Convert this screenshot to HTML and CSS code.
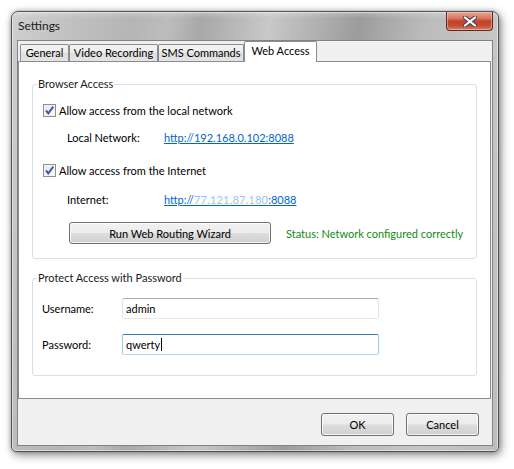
FILE: index.html
```html
<!DOCTYPE html>
<html>
<head>
<meta charset="utf-8">
<link rel="stylesheet" href="styles.css">
</head>
<body>
<div class="window">
  <div class="titlebar">
    <span class="title">Settings</span>
    <div class="close">
      <svg width="16" height="11" viewBox="0 0 16 11">
        <path d="M3 1.5 L13 9.5 M13 1.5 L3 9.5" stroke="#4a4a58" stroke-width="4.2" stroke-linecap="round"/>
        <path d="M3 1.5 L13 9.5 M13 1.5 L3 9.5" stroke="#ffffff" stroke-width="2.2" stroke-linecap="round"/>
      </svg>
    </div>
  </div>
  <div class="client">
    <div class="tabs">
      <div class="tab t-general">General</div>
      <div class="tab t-video">Video Recording</div>
      <div class="tab t-sms">SMS Commands</div>
      <div class="tab active t-web">Web Access</div>
    </div>
    <div class="panel">
      <fieldset class="group g-browser">
        <legend>Browser Access</legend>
        <div class="group-body b-browser">
          <div class="check-row">
            <span class="checkbox"><svg width="11" height="11" viewBox="0 0 11 11"><path d="M2 5.5 L4.3 8.3 L9.3 1.6" fill="none" stroke="#3c5aa8" stroke-width="2"/></svg></span>
            <span>Allow access from the local network</span>
          </div>
          <div class="info-row r-local">
            <span class="info-label">Local Network:</span>
            <a class="link">http://192.168.0.102:8088</a>
          </div>
          <div class="check-row second">
            <span class="checkbox"><svg width="11" height="11" viewBox="0 0 11 11"><path d="M2 5.5 L4.3 8.3 L9.3 1.6" fill="none" stroke="#3c5aa8" stroke-width="2"/></svg></span>
            <span>Allow access from the Internet</span>
          </div>
          <div class="info-row r-inet">
            <span class="info-label">Internet:</span>
            <a class="link">http://<span class="blur">77.121.87.180</span>:8088</a>
          </div>
          <div class="wizard-row">
            <div class="btn wizard">Run Web Routing Wizard</div>
            <span class="status">Status: Network configured correctly</span>
          </div>
        </div>
      </fieldset>
      <fieldset class="group g-pass">
        <legend>Protect Access with Password</legend>
        <div class="group-body b-pass">
          <div class="field-row">
            <span class="field-label">Username:</span>
            <div class="textbox">admin</div>
          </div>
          <div class="field-row second">
            <span class="field-label">Password:</span>
            <div class="textbox focused">qwerty<span class="caret"></span></div>
          </div>
        </div>
      </fieldset>
    </div>
    <div class="footer">
      <div class="btn dlg">OK</div>
      <div class="btn dlg">Cancel</div>
    </div>
  </div>
</div>
</body>
</html>
```
FILE: styles.css
```css
html, body {
  margin: 0;
  padding: 0;
  background: #ffffff;
}
body {
  width: 514px;
  height: 469px;
  overflow: hidden;
  font-family: Lato, "Noto Sans", sans-serif;
  font-size: 11px;
  color: #000;
}
.window {
  box-sizing: border-box;
  margin: 11px 0 0 11px;
  width: 488px;
  height: 441px;
  border: 1px solid #4f5258;
  border-radius: 7px 7px 5px 5px;
  background:
    linear-gradient(180deg, rgba(255,255,255,0.25) 0px, rgba(255,255,255,0) 6px),
    linear-gradient(100deg, #cfcfcf 0%, #bfbfbf 12%, #b5b5b5 22%, #bdbdbd 28%, #a8a8a8 34%, #c8c8c8 46%, #b2b2b2 54%, #9c9c9c 62%, #bcbcbc 74%, #c6c6c6 86%, #bdbdbd 100%);
  box-shadow: 2px 3px 10px rgba(0,0,0,0.45), 0 0 4px rgba(0,0,0,0.25), inset 0 0 0 1px rgba(255,255,255,0.45);
  display: flex;
  flex-direction: column;
}
.titlebar {
  height: 28px;
  display: flex;
  align-items: flex-start;
  padding-left: 6px;
}
.title {
  font-size: 12px;
  line-height: 16px;
  margin-top: 6px;
  color: #1a1a1a;
}
.close {
  margin-left: auto;
  margin-right: 5px;
  width: 45px;
  height: 18px;
  border: 1px solid #5c2a22;
  border-top: none;
  border-radius: 0 0 4px 4px;
  background: linear-gradient(180deg, #e7a595 0%, #d97863 35%, #c4432a 50%, #c44a30 75%, #d9826a 100%);
  box-shadow: inset 0 0 0 1px rgba(255,220,210,0.45);
  display: flex;
  align-items: center;
  justify-content: center;
}
.client {
  flex: 1;
  margin: 0 5px 5px 5px;
  border: 1px solid #80838a;
  background: #f0f0f0;
  display: flex;
  flex-direction: column;
}
.tabs {
  height: 20px;
  display: flex;
  align-items: flex-end;
  padding-left: 2px;
  position: relative;
  z-index: 1;
}
.tab {
  box-sizing: border-box;
  height: 17px;
  border: 1px solid #898c95;
  border-bottom: none;
  background: linear-gradient(180deg, #f4f4f4 0%, #ebebeb 50%, #dedede 51%, #e4e4e4 100%);
  line-height: 15px;
  text-align: center;
  border-radius: 2px 2px 0 0;
}
.t-general { width: 49px; }
.t-video { width: 89px; }
.t-sms { width: 86px; }
.t-web { width: 73px; }
.tab.active {
  height: 21px;
  margin-bottom: -1px;
  background: #ffffff;
  line-height: 17px;
}
.panel {
  box-sizing: border-box;
  width: 473px;
  height: 338px;
  border: 1px solid #898c95;
  background: #ffffff;
}
.group {
  box-sizing: border-box;
  width: 445px;
  margin: 0 0 0 13px;
  padding: 0;
  border: 1px solid #d5dfe5;
  border-radius: 3px;
  min-width: 0;
}
.group legend {
  margin-left: 4px;
  padding: 0 1px;
  line-height: 16px;
  color: #1a1a1a;
}
.g-browser {
  margin-top: 14px;
  height: 183px;
}
.g-pass {
  margin-top: 11px;
  height: 106px;
}
.b-browser { padding: 10px 0 0 10px; }
.b-pass { padding: 12px 0 0 9px; }
.check-row {
  display: flex;
  align-items: center;
  height: 16px;
}
.check-row.second { margin-top: 17px; }
.checkbox {
  box-sizing: border-box;
  width: 13px;
  height: 13px;
  border: 1px solid #8e8f8f;
  background: linear-gradient(135deg, #e4e4e4 0%, #f6f6f6 60%, #ffffff 100%);
  box-shadow: inset 0 0 0 1px #f4f4f4;
  margin-right: 3px;
  display: flex;
  align-items: center;
  justify-content: center;
}
.info-row {
  display: flex;
  align-items: center;
  height: 16px;
  padding-left: 24px;
}
.r-local { margin-top: 11px; }
.r-inet { margin-top: 13px; }
.info-label { width: 97px; }
.link {
  color: #0066cc;
  text-decoration: underline;
}
.blur {
  color: #9cc3ee;
  letter-spacing: 0.2px;
}
.wizard-row {
  display: flex;
  align-items: center;
  margin-top: 15px;
  padding-left: 26px;
}
.btn {
  box-sizing: border-box;
  border: 1px solid #707070;
  border-radius: 3px;
  background: linear-gradient(180deg, #f2f2f2 0%, #ebebeb 48%, #dddddd 52%, #cfcfcf 100%);
  box-shadow: inset 0 0 0 1px rgba(255,255,255,0.75);
  display: flex;
  align-items: center;
  justify-content: center;
  color: #000;
}
.wizard {
  width: 202px;
  height: 22px;
}
.status {
  margin-left: 15px;
  color: #118a11;
}
.field-row {
  display: flex;
  align-items: center;
}
.field-row.second { margin-top: 15px; }
.field-label { width: 80px; }
.textbox {
  box-sizing: border-box;
  width: 257px;
  height: 21px;
  border: 1px solid #e2e3ea;
  border-top-color: #abadb3;
  border-bottom-color: #e3e9ef;
  border-radius: 2px;
  background: #fff;
  padding-left: 3px;
  display: flex;
  align-items: center;
}
.textbox.focused {
  border-top-color: #3d7bad;
  border-bottom-color: #b7d9ed;
  border-left-color: #a4c9e3;
  border-right-color: #a4c9e3;
}
.caret {
  display: inline-block;
  width: 1px;
  height: 13px;
  background: #000;
  margin-left: 1px;
}
.footer {
  flex: 1;
  display: flex;
  justify-content: flex-end;
  align-items: flex-start;
  gap: 12px;
  padding: 14px 13px 0 0;
}
.btn.dlg {
  width: 73px;
  height: 23px;
}
```
